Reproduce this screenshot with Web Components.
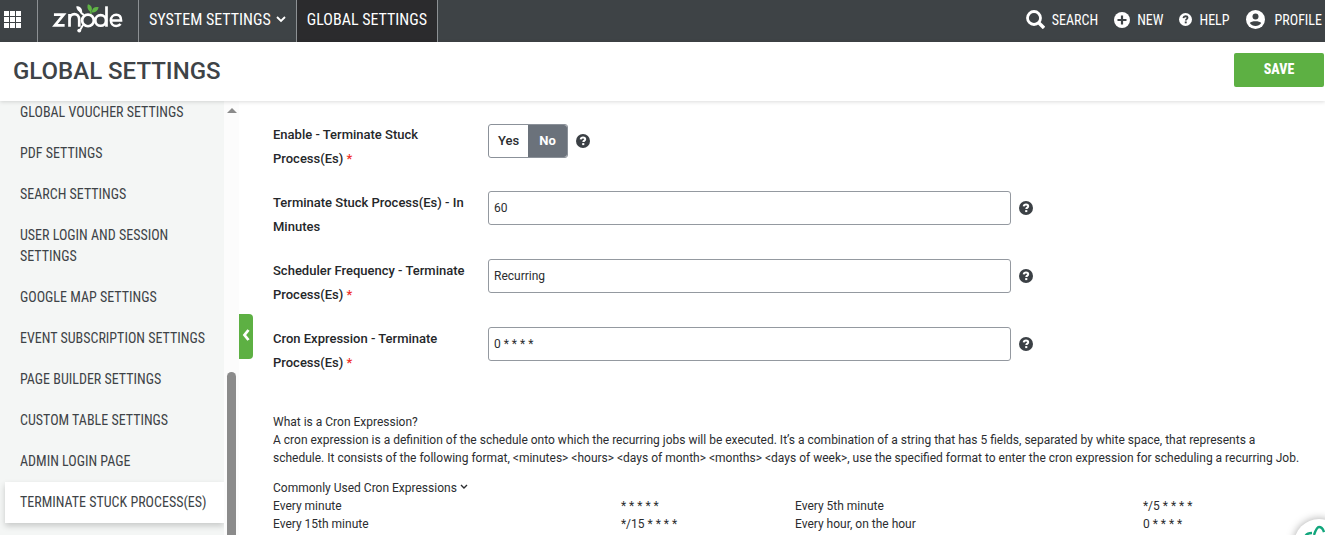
<!DOCTYPE html>
<html lang="en">
<head>
<meta charset="utf-8">
<title>Global Settings</title>
<style>
  html, body { height: 100%; margin: 0; }
  body { overflow: hidden; font-family: Roboto, "Liberation Sans", sans-serif; font-size: 12px; line-height: 18px; color: #2b2d30; background: #fff; }
</style>
</head>
<body>
<settings-app></settings-app>
<script>
const COND = '"Roboto Condensed", Roboto, "Liberation Sans", sans-serif';

function define(name, html, setup) {
  const template = document.createElement('template');
  template.innerHTML = html;
  customElements.define(name, class extends HTMLElement {
    constructor() {
      super();
      this.attachShadow({ mode: 'open' }).append(template.content.cloneNode(true));
    }
    connectedCallback() { if (setup) setup(this, this.shadowRoot); }
  });
}

define('help-tip', `
<style>
  :host { display: flex; }
  button { display: flex; padding: 0; border: 0; background: none; color: #3b4045; cursor: pointer; }
</style>
<button type="button" aria-label="Help">
  <svg width="14" height="14" viewBox="0 0 14 14"><circle cx="7" cy="7" r="7" fill="currentColor"/>
  <path d="M4.7 5.4C4.9 4 5.8 3.500 7 3.500s2.200.6 2.200 1.700c0 1.400-1.900 1.400-1.900 2.900" fill="none" stroke="#fff" stroke-width="2"/><rect x="6.200" y="9.100" width="2.100" height="2" fill="#fff"/></svg>
</button>`);

define('top-bar', `
<style>
  :host { display: flex; height: 42px; background: #3e4346; font-family: ${COND}; color: #fff; }
  a { color: inherit; text-decoration: none; display: flex; align-items: center; white-space: nowrap; }
  .cell { border-right: 1px solid #8d9194; font-size: 16px; padding: 0 10px 3px; box-sizing: border-box; }
  .apps { width: 38px; padding: 0 0 4px 4px; }
  .logo { width: 101px; padding: 0 0 8px 14px; }
  .current { background: #2b2b2d; }
  .cell svg.chev { margin-left: 5px; }
  nav { display: flex; }
  .tools { margin-left: auto; gap: 16px; padding: 0 3px 3px 0; font-size: 14px; }
  .tools a { gap: 7px; }
  .tools a.profile { gap: 10px; }
</style>
<nav aria-label="Main">
  <a class="cell apps" href="#apps" aria-label="Applications"><svg width="17" height="17" viewBox="0 0 17 17" fill="#fff"><path d="M0 0h5v5H0zM6 0h5v5H6zM12 0h5v5h-5zM0 6h5v5H0zM6 6h5v5H6zM12 6h5v5h-5zM0 12h5v5H0zM6 12h5v5H6zM12 12h5v5h-5z"/></svg></a>
  <a class="cell logo" href="#home" aria-label="znode">
    <svg width="72" height="34" viewBox="0 0 74 34" fill="none" stroke="#fff" stroke-width="2.800">
      <path d="M2 14.500H12L3 25.500H13"/><path d="M18 27V14M18 20c0-8 10-8 10 0v7"/>
      <circle cx="37" cy="20.500" r="6"/><path d="M33 15c-2-1-4-3-5-5M32 25l-3 5" stroke-width="2"/><circle cx="28" cy="31" r="2" fill="#fff" stroke="none"/>
      <path d="M25 6c4 0 6 2 6 6-3 0-6-2-6-6z" fill="#fff" stroke="none"/>
      <circle cx="50" cy="20.500" r="5.500"/><path d="M56 27V6"/>
      <path d="M60.500 20.500H71c0-3.500-2-5.700-5-5.700s-5.500 2.400-5.500 5.700 2.200 5.700 5.500 5.700c2 0 3.500-.7 4.500-2" stroke-width="2.600"/>
      <g fill="#5fb345" stroke="none"><path d="M40 12C36 10 36 6 37 4c4 1 5 5 3 8z"/><path d="M41 12c0-4 3-6 7-5-1 4-4 6-7 5z"/></g><path d="M40 11v3" stroke="#5fb345" stroke-width="1.500"/>
    </svg></a>
  <a class="cell" href="#system">SYSTEM SETTINGS<svg class="chev" width="10" height="7" viewBox="0 0 10 7" fill="none" stroke="#fff" stroke-width="1.800"><path d="M1 1l4 4 4-4"/></svg></a>
  <a class="cell current" href="#global" aria-current="page">GLOBAL SETTINGS</a>
</nav>
<nav class="tools" aria-label="Tools">
  <a href="#search"><svg width="19" height="19" viewBox="0 0 19 19" fill="none" stroke="#fff"><circle cx="8" cy="8" r="6.500" stroke-width="2.800"/><path d="M12.500 12.500l5.500 5.500" stroke-width="3.400"/></svg>SEARCH</a>
  <a href="#new"><svg width="16" height="16" viewBox="0 0 16 16"><circle cx="8" cy="8" r="8" fill="#fff"/><path d="M8 3.500v9M3.500 8h9" stroke="#3e4346" stroke-width="2.200"/></svg>NEW</a>
  <a href="#help"><svg width="13" height="13" viewBox="0 0 14 14"><circle cx="7" cy="7" r="7" fill="#fff"/><path d="M4.700 5.400C4.900 4 5.800 3.500 7 3.500s2.200.6 2.200 1.700c0 1.400-1.900 1.400-1.900 2.900" fill="none" stroke="#3e4346" stroke-width="1.900"/><rect x="6.200" y="9.100" width="2.100" height="2" fill="#3e4346"/></svg>HELP</a>
  <a class="profile" href="#profile"><svg width="19" height="19" viewBox="0 0 19 19"><circle cx="9.500" cy="9.500" r="9.500" fill="#fff"/><circle cx="9.500" cy="6.500" r="3" fill="#3e4346"/><path d="M3.800 13c1.500-2.400 9.900-2.400 11.400 0-2.400 4-9 4-11.400 0z" fill="#3e4346"/></svg>PROFILE</a>
</nav>`);

define('title-bar', `
<style>
  :host { display: flex; align-items: center; justify-content: space-between; height: 59px; box-sizing: border-box; padding: 0 1px 3px 13px; background: #fff; box-shadow: 0 1px 4px rgba(0,0,0,.14); position: relative; z-index: 1; }
  h1 { margin: 0; padding-top: 2px; font-size: 24px; line-height: 28px; font-weight: 500; color: #3e4347; }
  button { width: 90px; height: 34px; padding: 0 0 2px; border: 0; border-radius: 2px; background: #5db043; color: #fff; font: 800 14px ${COND}; cursor: pointer; }
</style>
<h1>GLOBAL SETTINGS</h1>
<button type="button">SAVE</button>`);

define('side-item', `
<style>
  :host { display: block; padding-left: 5px; }
  a { display: block; padding: 10px 15px; font: 14px/21px ${COND}; color: #3e4347; text-decoration: none; }
  :host([flush]) a { padding-top: 1px; }
  :host([active]) a { background: #fff; box-shadow: 0 3px 6px rgba(0,0,0,.18); }
</style>
<a href="#section"><slot></slot></a>`);

define('side-menu', `
<style>
  :host { display: flex; width: 239px; flex: none; background: #f4f6f5; overflow: hidden; }
  nav { flex: 1; overflow: hidden; }
  .bar { width: 15px; background: #fcfcfc; display: flex; flex-direction: column; align-items: center; justify-content: space-between; }
  .bar svg { margin-top: 7px; }
  .thumb { width: 9px; height: 163px; border-radius: 5px 5px 0 0; background: #8b8b8b; }
</style>
<nav aria-label="Settings">
  <side-item flush>GLOBAL VOUCHER SETTINGS</side-item>
  <side-item>PDF SETTINGS</side-item>
  <side-item>SEARCH SETTINGS</side-item>
  <side-item>USER LOGIN AND SESSION SETTINGS</side-item>
  <side-item>GOOGLE MAP SETTINGS</side-item>
  <side-item>EVENT SUBSCRIPTION SETTINGS</side-item>
  <side-item>PAGE BUILDER SETTINGS</side-item>
  <side-item>CUSTOM TABLE SETTINGS</side-item>
  <side-item>ADMIN LOGIN PAGE</side-item>
  <side-item active>TERMINATE STUCK PROCESS(ES)</side-item>
</nav>
<div class="bar"><svg width="10" height="5" viewBox="0 0 10 5"><path d="M5 0l5 5H0z" fill="#8b8b8b"/></svg><div class="thumb"></div></div>`);

const ROW = `
  :host { display: grid; grid-template-columns: 215px 50% auto; justify-content: start; align-items: start; min-height: 48px; }
  .label { font-size: 13px; line-height: 24px; font-weight: 500; padding-right: 12px; color: #25272a; }
  .req { color: #f0322b; }
  help-tip { margin: 10px 0 0 8px; }
`;

define('text-row', `
<style>${ROW}
  input { width: 100%; height: 34px; margin: 0; box-sizing: border-box; padding: 0 5px; border: 1px solid #9499a0; border-radius: 3px; font: 12px Roboto, "Liberation Sans", sans-serif; color: #2b2d30; background: #fff; }
</style>
<label class="label" for="field"><slot></slot> <span class="req" hidden>*</span></label>
<input id="field" type="text">
<help-tip></help-tip>`, (host, root) => {
  root.querySelector('input').value = host.getAttribute('value');
  root.querySelector('.req').hidden = !host.hasAttribute('required');
});

define('toggle-row', `
<style>${ROW}
  .control { display: flex; padding-top: 1px; }
  fieldset { display: flex; margin: 0; padding: 0; border: 1px solid #8b9199; border-radius: 3px; overflow: hidden; height: 34px; box-sizing: border-box; }
  fieldset label { display: grid; place-items: center; width: 39px; font-size: 13px; font-weight: 500; }
  input { appearance: none; grid-area: 1/1; width: 100%; height: 100%; margin: 0; }
  fieldset span { grid-area: 1/1; position: relative; }
  input:checked { background: #6b727b; }
  input:checked + span { color: #fff; font-weight: 700; }
</style>
<span class="label" id="caption"><slot></slot> <span class="req">*</span></span>
<div class="control">
  <fieldset aria-labelledby="caption">
    <label><input type="radio" name="enable"><span>Yes</span></label>
    <label><input type="radio" name="enable" checked><span>No</span></label>
  </fieldset>
  <help-tip></help-tip>
</div>`);

define('cron-help', `
<style>
  :host { display: block; padding-right: 2px; }
  p { margin: 0; padding-right: 16px; }
  button { display: flex; align-items: center; gap: 3px; margin: 12px 0 0; padding: 0; border: 0; background: none; font: inherit; color: inherit; }
  button svg { margin-bottom: 2px; }
  table { width: 100%; table-layout: fixed; border-collapse: collapse; }
  td { padding: 0; width: 33.33%; }
  td:nth-child(even) { width: 16.67%; }
</style>
<p>What is a Cron Expression?</p>
<p>A cron expression is a definition of the schedule onto which the recurring jobs will be executed. It’s a combination of a string that has 5 fields, separated by white space, that represents a schedule. It consists of the following format, &lt;minutes&gt; &lt;hours&gt; &lt;days of month&gt; &lt;months&gt; &lt;days of week&gt;, use the specified format to enter the cron expression for scheduling a recurring Job.</p>
<button type="button" aria-expanded="true">Commonly Used Cron Expressions<svg width="8" height="6" viewBox="0 0 8 6" fill="none" stroke="currentColor" stroke-width="1.400"><path d="M1 1l3 3 3-3"/></svg></button>
<table>
  <tr><td>Every minute</td><td>* * * * *</td><td>Every 5th minute</td><td>*/5 * * * *</td></tr>
  <tr><td>Every 15th minute</td><td>*/15 * * * *</td><td>Every hour, on the hour</td><td>0 * * * *</td></tr>
</table>`);

define('settings-app', `
<style>
  :host { display: flex; flex-direction: column; height: 100%; overflow: hidden; position: relative; }
  .body { display: flex; flex: 1; min-height: 0; }
  main { flex: 1; min-width: 0; position: relative; padding: 22px 6px 0 34px; }
  form { display: grid; gap: 20px; margin-bottom: 38px; }
  .fold { position: absolute; left: 0; top: 213px; width: 14px; height: 45px; padding: 0 0 4px; border: 0; border-radius: 0 4px 4px 0; background: #5db043; display: flex; align-items: center; justify-content: center; }
  .chat { position: absolute; right: -19px; bottom: -34px; width: 50px; height: 50px; padding: 0; border: 0; border-radius: 50%; background: #fff; box-shadow: 0 0 8px rgba(0,0,0,.35); }
</style>
<top-bar></top-bar>
<title-bar></title-bar>
<div class="body">
  <side-menu></side-menu>
  <main>
    <button class="fold" type="button" aria-label="Collapse menu"><svg width="8" height="12" viewBox="0 0 8 12" fill="none" stroke="#fff" stroke-width="2.800"><path d="M6.500 1L2.500 6l4 5"/></svg></button>
    <form>
      <toggle-row>Enable - Terminate Stuck Process(Es)</toggle-row>
      <text-row value="60">Terminate Stuck Process(Es) - In Minutes</text-row>
      <text-row value="Recurring" required>Scheduler Frequency - Terminate Process(Es)</text-row>
      <text-row value="0 * * * *" required>Cron Expression - Terminate Process(Es)</text-row>
    </form>
    <cron-help></cron-help>
  </main>
</div>
<button class="chat" type="button" aria-label="Open assistant"><svg width="50" height="50" viewBox="0 0 50 50" fill="none" stroke="#12a67c" stroke-width="2.400"><path d="M11 18c1-3 4-4 7-4M20 16c1-3 3-8 5-8 3 0 4 2 5 5"/></svg></button>`);
</script>
</body>
</html>
